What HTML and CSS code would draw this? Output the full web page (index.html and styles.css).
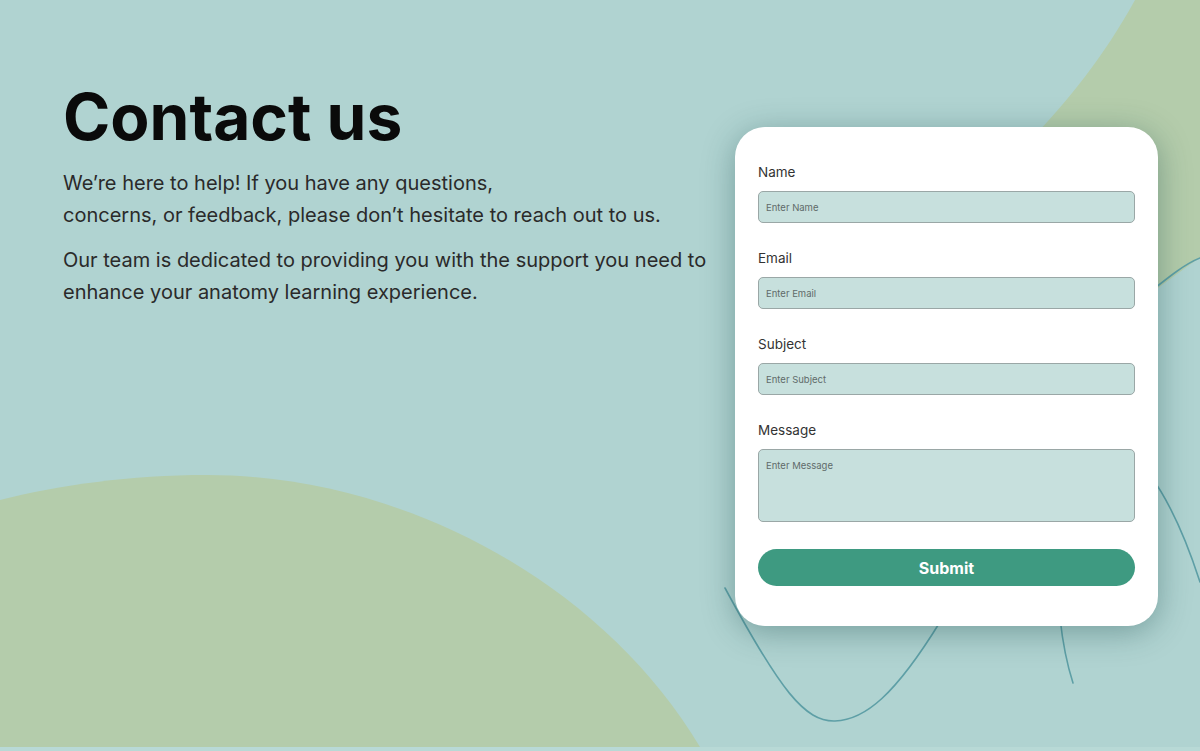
FILE: index.html
```html
<!DOCTYPE html>
<html lang="en">
<head>
<meta charset="utf-8">
<title>Contact us</title>
<link rel="stylesheet" href="styles.css">
</head>
<body>
<div class="page">
  <svg class="bg" width="1200" height="751" viewBox="0 0 1200 751" aria-hidden="true">
    <rect x="0" y="0" width="1200" height="751" fill="#b0d3d1"/>
    <rect x="0" y="747" width="1200" height="4" fill="#b8d9d6"/>
    <path d="M0,500 C60,485 130,475 207,475 C400,475 600,580 700,747 L0,747 Z" fill="#b4ccab"/>
    <path d="M1135,0 C1105,55 1065,105 1030,140 L1000,300 C1080,300 1120,305 1158,288 C1175,276 1188,265 1200,258 L1200,0 Z" fill="#b4ccab"/>
    <g fill="none" stroke="#5e9fa6" stroke-width="1.6" stroke-linecap="round">
      <path d="M1200,258 C1185,264 1170,276 1150,292"/>
      <path d="M1150,475 C1172,505 1188,545 1200,582"/>
      <path d="M725,588 C780,690 805,722 835,721 C865,720 895,695 940,622"/>
      <path d="M1060,618 Q1064,655 1073,683"/>
    </g>
  </svg>
  <div class="content">
    <section class="intro">
      <h1 class="title">Contact us</h1>
      <p class="lead">We’re here to help! If you have any questions,<br>concerns, or feedback, please don’t hesitate to reach out to us.</p>
      <p class="lead">Our team is dedicated to providing you with the support you need to enhance your anatomy learning experience.</p>
    </section>
    <form class="card">
      <div class="field">
        <label class="label" for="name">Name</label>
        <input class="input" id="name" type="text" placeholder="Enter Name">
      </div>
      <div class="field">
        <label class="label" for="email">Email</label>
        <input class="input" id="email" type="text" placeholder="Enter Email">
      </div>
      <div class="field">
        <label class="label" for="subject">Subject</label>
        <input class="input" id="subject" type="text" placeholder="Enter Subject">
      </div>
      <div class="field field-last">
        <label class="label" for="message">Message</label>
        <textarea class="input textarea" id="message" placeholder="Enter Message"></textarea>
      </div>
      <button class="submit" type="button">Submit</button>
    </form>
  </div>
</div>
</body>
</html>
```

FILE: styles.css
```css
* { box-sizing: border-box; }

html, body {
  margin: 0;
  padding: 0;
}

body {
  font-family: "Inter", "Noto Sans", "Liberation Sans", sans-serif;
  background: #b0d3d1;
  color: #222;
}

.page {
  position: relative;
  width: 1200px;
  height: 751px;
  overflow: hidden;
}

.bg {
  position: absolute;
  left: 0;
  top: 0;
  z-index: 0;
}

.content {
  position: relative;
  z-index: 1;
  display: flex;
  align-items: flex-start;
  height: 100%;
}

.intro {
  padding: 78px 0 0 63px;
  width: 720px;
}

.title {
  margin: 0 0 12px;
  font-size: 64px;
  line-height: 77px;
  font-weight: 700;
  letter-spacing: 0;
  color: #0a0a0a;
}

.lead {
  margin: 0 0 13px;
  font-size: 20px;
  line-height: 32px;
  color: #2a2a2a;
  width: 660px;
}

.card {
  margin: 127px 42px 0 auto;
  width: 423px;
  padding: 35px 23px 40px;
  background: #fff;
  border-radius: 30px;
  box-shadow: 0 6px 32px rgba(20, 70, 70, 0.38);
  display: flex;
  flex-direction: column;
}

.field {
  display: flex;
  flex-direction: column;
  margin-bottom: 25px;
}

.field-last {
  margin-bottom: 27px;
}

.label {
  font-size: 13.5px;
  line-height: 20px;
  color: #333;
  margin-bottom: 9px;
}

.input {
  height: 32px;
  width: 100%;
  background: #c7e0dd;
  border: 1px solid #9aa7a6;
  border-radius: 5px;
  padding: 0 7px;
  font-family: inherit;
  font-size: 9.5px;
  color: #333;
  outline: none;
}

.input::placeholder {
  color: #5f6b6a;
}

.textarea {
  height: 73px;
  padding-top: 10px;
  resize: none;
}

.submit {
  height: 37px;
  border: none;
  border-radius: 19px;
  background: #3e9a81;
  color: #fff;
  font-family: inherit;
  font-size: 16px;
  font-weight: 700;
}
```
